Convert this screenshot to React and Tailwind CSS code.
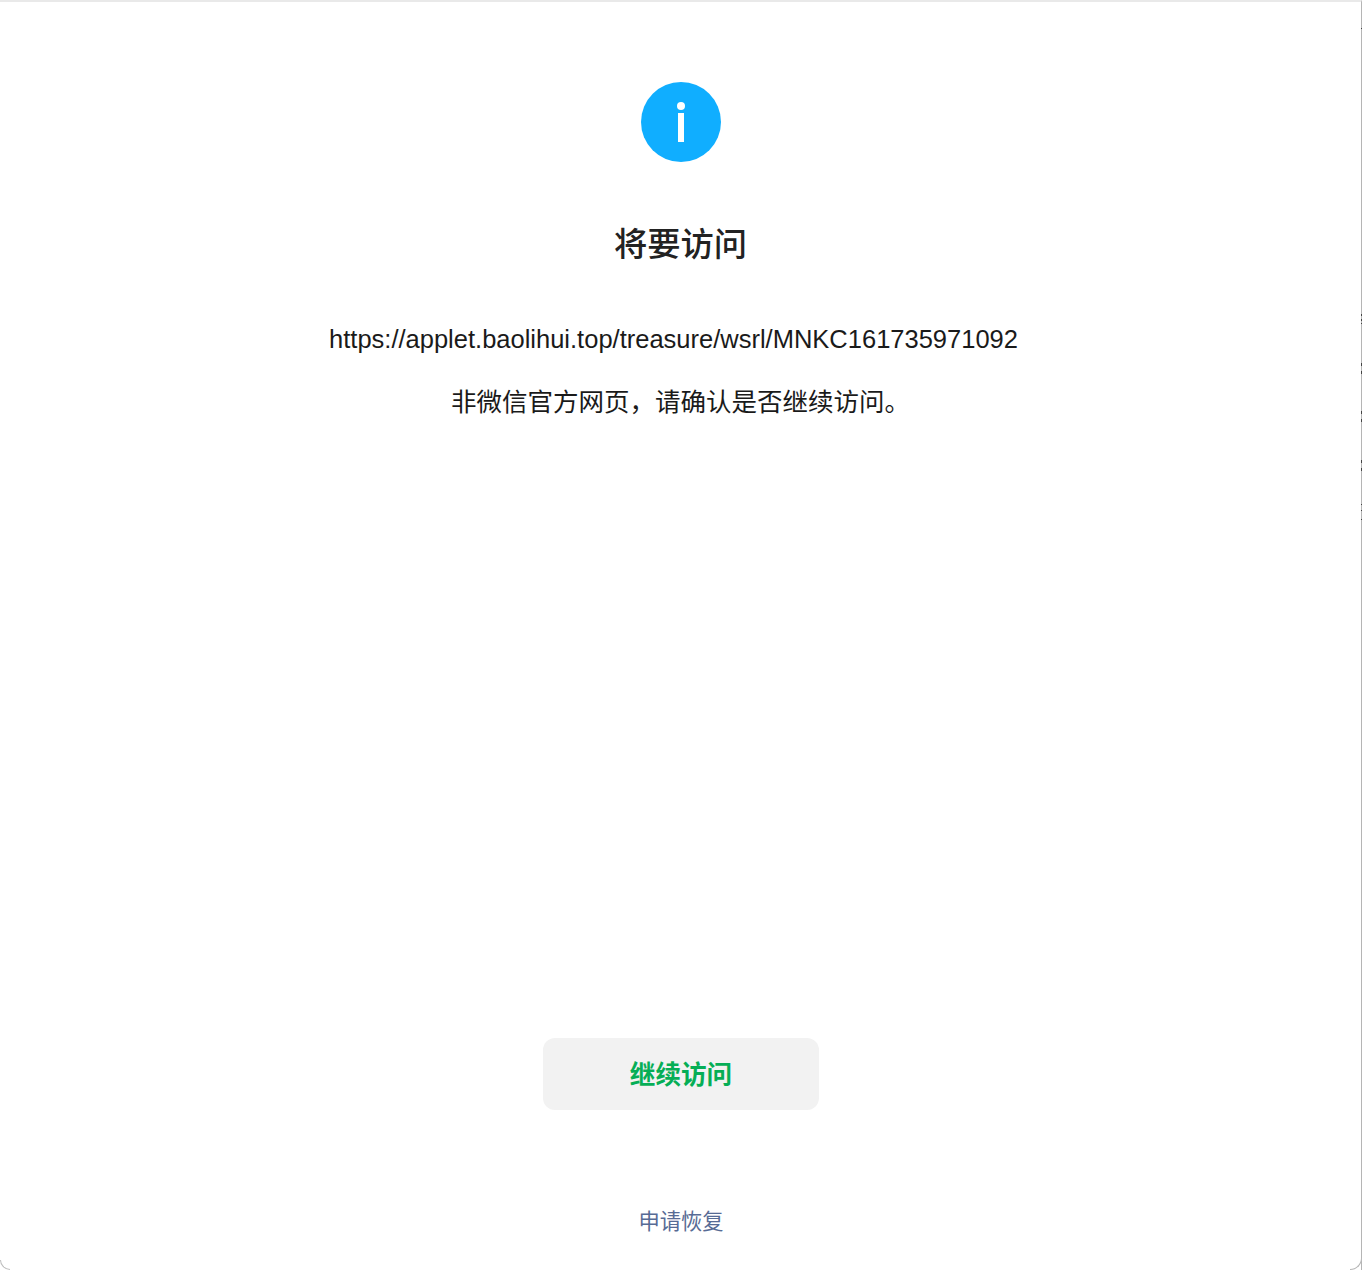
const FONT = "font-['Liberation_Sans','Noto_Sans_CJK_SC',sans-serif]";

// stray dark marks along the window's right edge
const EDGE_MARKS = [
  [28, 1], [314, 2], [319, 2], [323, 1], [363, 3], [371, 3], [411, 3], [419, 3],
  [460, 3], [468, 3], [504, 1], [510, 1], [519, 1],
];

// info glyph in the top circle
const InfoIcon = () => (
  <div className="w-20 h-20 rounded-full bg-[#10aeff] flex items-center justify-center">
    <svg width="80" height="80" viewBox="0 0 80 80">
      <circle cx="40" cy="24" r="4" fill="#fff" />
      <rect x="37" y="31" width="6" height="29" fill="#fff" />
    </svg>
  </div>
);

export default function App() {
  return (
    <div className={`${FONT} relative h-[1270px] bg-white overflow-hidden`}>
      <div className="h-full flex flex-col items-center border-t-2 border-t-[#e9e9e9] border-r border-r-[#b5b5b5] text-[#1a1a1a]">
        <div className="mt-[80px]">
          <InfoIcon />
        </div>
        <h1 className="mt-[60px] text-[33.3px] leading-[46px] font-medium text-[#222]">将要访问</h1>
        <p className="mt-[53px] pr-[14px] text-[25.5px] leading-[36px]">https://applet.baolihui.top/treasure/wsrl/MNKC161735971092</p>
        <p className="mt-[27px] text-[25.5px] leading-[36px]">非微信官方网页，请确认是否继续访问。</p>
        <button className="mt-[618px] w-[276px] h-[72px] pt-[2px] pl-px rounded-xl bg-[#f2f2f2] text-[#06ae56] text-[25.6px] font-bold">
          继续访问
        </button>
        <a className="mt-[97px] pl-px text-[21.3px] leading-[30px] text-[#576b95]">申请恢复</a>
      </div>

      {/* rounded window corners */}
      <div className="absolute left-0 bottom-0 w-[10px] h-[10px] bg-white border-l border-b border-[#bdbdbd] rounded-bl-[12px]" />
      <div className="absolute right-0 bottom-0 w-[12px] h-[12px] bg-white border-r border-b border-[#b5b5b5] rounded-br-[12px]" />

      {EDGE_MARKS.map(([top, height]) => (
        <div
          key={top}
          className="absolute right-0 w-px bg-[#444]"
          style={{ top, height }}
        />
      ))}
    </div>
  );
}
